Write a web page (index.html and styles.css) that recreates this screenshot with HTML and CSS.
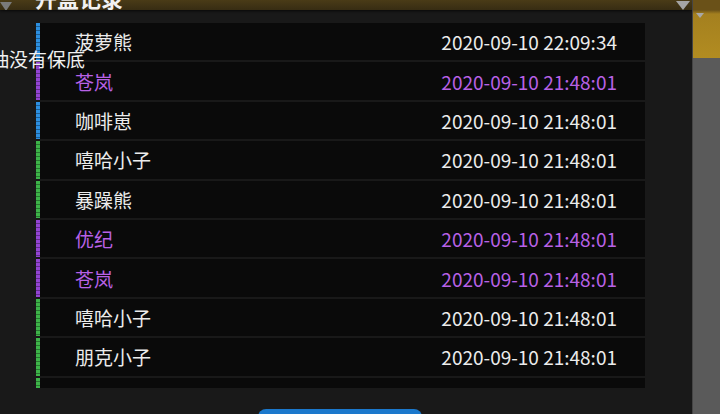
FILE: index.html
```html
<!DOCTYPE html>
<html lang="zh">
<head>
<meta charset="utf-8">
<title>开盒记录</title>
<link rel="stylesheet" href="styles.css">
</head>
<body>
<div class="stage">
  <section class="panel">
    <header class="head">
      <span class="tri tri-left"></span>
      <h1 class="head-title">开盒记录</h1>
      <span class="tri tri-right"></span>
    </header>
    <p class="note">抽没有保底</p>
    <ul class="list">
      <li class="row blue"><span class="name">菠萝熊</span><span class="time">2020-09-10 22:09:34</span></li>
      <li class="row purple"><span class="name">苍岚</span><span class="time">2020-09-10 21:48:01</span></li>
      <li class="row blue"><span class="name">咖啡崽</span><span class="time">2020-09-10 21:48:01</span></li>
      <li class="row green"><span class="name">嘻哈小子</span><span class="time">2020-09-10 21:48:01</span></li>
      <li class="row green"><span class="name">暴躁熊</span><span class="time">2020-09-10 21:48:01</span></li>
      <li class="row purple"><span class="name">优纪</span><span class="time">2020-09-10 21:48:01</span></li>
      <li class="row purple"><span class="name">苍岚</span><span class="time">2020-09-10 21:48:01</span></li>
      <li class="row green"><span class="name">嘻哈小子</span><span class="time">2020-09-10 21:48:01</span></li>
      <li class="row green"><span class="name">朋克小子</span><span class="time">2020-09-10 21:48:01</span></li>
      <li class="row green"><span class="name">暴躁熊</span><span class="time">2020-09-10 21:48:01</span></li>
    </ul>
    <button class="confirm" type="button">确定</button>
  </section>
  <aside class="side">
    <div class="side-top"><span class="tri tri-small"></span></div>
  </aside>
</div>
</body>
</html>
```

FILE: styles.css
```css
* { box-sizing: border-box; }

html, body {
  margin: 0;
  padding: 0;
  background: #181818;
  overflow: hidden;
  font-family: "Noto Sans CJK SC", "Noto Sans", sans-serif;
}

.stage {
  display: flex;
  width: 720px;
  height: 414px;
}

/* main dialog */
.panel {
  position: relative;
  width: 692px;
  height: 414px;
  background: #191919;
  display: flex;
  flex-direction: column;
  overflow: hidden;
}

.head {
  position: relative;
  height: 10px;
  flex: none;
  background: linear-gradient(#4a3b17, #372c13);
  box-shadow: 0 1px 3px rgba(0, 0, 0, 0.7);
  overflow: hidden;
}

.head-title {
  margin: -14px 0 0 35px;
  font-size: 22px;
  line-height: 22px;
  font-weight: 700;
  color: #f2f2f2;
}

.tri {
  position: absolute;
  width: 0;
  height: 0;
  border-style: solid;
}

.tri-left {
  left: 0;
  top: 2px;
  border-width: 9px 6px 0 6px;
  border-color: #7a7a7a transparent transparent transparent;
}

.tri-right {
  right: 2px;
  top: 1px;
  border-width: 9px 7px 0 7px;
  border-color: #a5a5a5 transparent transparent transparent;
}

/* floating hint over the list edge */
.note {
  position: absolute;
  left: -10px;
  top: 48px;
  margin: 0;
  font-size: 19px;
  line-height: 22px;
  color: #f0f0f0;
  z-index: 2;
}

.list {
  list-style: none;
  margin: 13px 0 0 36px;
  padding: 0;
  width: 609px;
  height: 365px;
  flex: none;
  overflow: hidden;
  display: flex;
  flex-direction: column;
  gap: 2px;
}

.row {
  flex: none;
  height: 37.4px;
  display: flex;
  align-items: center;
  justify-content: space-between;
  padding: 0 28px 0 39px;
  background: #0a0a0a;
  font-size: 19px;
  color: #ececec;
  position: relative;
}

/* rarity stripe on the left of each row */
.row::before {
  content: "";
  position: absolute;
  left: 0;
  top: 0;
  bottom: 0;
  width: 4px;
  background-image: repeating-linear-gradient(180deg, rgba(0, 0, 0, 0) 0 3px, rgba(0, 0, 0, 0.35) 3px 4px);
}

.row.blue::before { background-color: #2c8fe0; }
.row.purple::before { background-color: #9244d2; }
.row.green::before { background-color: #3db449; }

.row.purple { color: #b861e6; }

.name { white-space: nowrap; }
.time { white-space: nowrap; }

.confirm {
  flex: none;
  margin: 21px 0 0 258px;
  width: 164px;
  height: 40px;
  border: 0;
  border-radius: 8px;
  background: #1b78cc;
  color: #fff;
  font: inherit;
  font-size: 18px;
}

/* neighbouring card peeking in on the right */
.side {
  width: 28px;
  height: 414px;
  background: #5a5a5a;
  border-left: 1px solid #444;
}

.side-top {
  position: relative;
  height: 58px;
  background: linear-gradient(#6a5118 0 10px, #a4801f 14px, #b28c21);
}

.tri-small {
  left: 3px;
  top: 13px;
  border-width: 5px 4px 0 4px;
  border-color: #a8a8a8 transparent transparent transparent;
}
```
